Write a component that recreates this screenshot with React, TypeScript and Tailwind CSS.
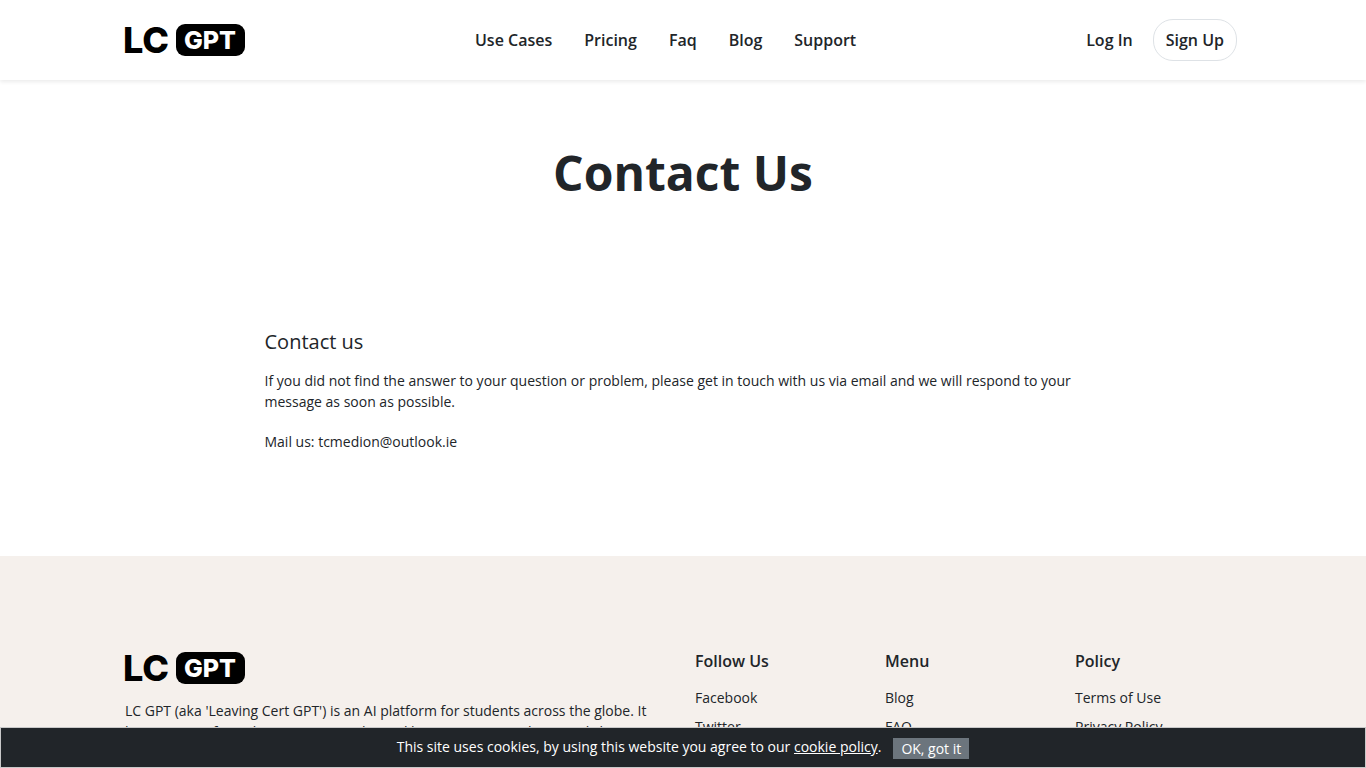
import { clsx } from "clsx";

//#region Data
const navLinks = ["Use Cases", "Pricing", "Faq", "Blog", "Support"];

const footerColumns = [
  { title: "Follow Us", links: ["Facebook", "Twitter", "Instagram"] },
  { title: "Menu", links: ["Blog", "FAQ", "Support"] },
  { title: "Policy", links: ["Terms of Use", "Privacy Policy", "Cookie Policy"] },
];
//#endregion

type LogoProps = React.ComponentPropsWithoutRef<"a">;

function Logo({ className, ...props }: LogoProps) {
  return (
    <a href="#" className={clsx("block w-fit", className)} {...props}>
      <svg
        width="120"
        height="32"
        viewBox="0 0 120 32"
        role="img"
        aria-label="LC GPT"
        className="overflow-visible font-['Inter',sans-serif] font-extrabold"
      >
        <rect x="51" y="0" width="69" height="32" rx="9" fill="#000" />
        <text x="-2" y="29" fontSize="36" fill="#000">
          LC
        </text>
        <text x="59" y="25" fontSize="25" fill="#fff">
          GPT
        </text>
      </svg>
    </a>
  );
}

function Header() {
  return (
    <header className="relative bg-white shadow-[0_2px_4px_rgba(0,0,0,0.08)]">
      <div className="mx-auto flex h-20 max-w-[1140px] items-center justify-between px-3">
        <Logo />
        <nav className="flex gap-8 font-semibold">
          {navLinks.map((label) => (
            <a key={label} href="#">
              {label}
            </a>
          ))}
        </nav>
        <div className="mr-1 flex items-center gap-5 font-semibold">
          <a href="#">Log In</a>
          <a
            href="#"
            className="rounded-[20px] border border-[#dee2e6] px-3 py-2"
          >
            Sign Up
          </a>
        </div>
      </div>
    </header>
  );
}

function Content() {
  return (
    <main>
      <h1 className="pt-16 text-center text-5xl leading-[58px] font-bold">
        Contact Us
      </h1>
      <section className="mx-auto max-w-[861px] px-3 pt-32 pb-[104px] text-sm leading-[21px]">
        <h2 className="mb-4 text-xl leading-6">Contact us</h2>
        <p>
          If you did not find the answer to your question or problem, please get
          in touch with us via email and we will respond to your message as soon
          as possible.
        </p>
        <p className="mt-[19px]">Mail us: tcmedion@outlook.ie</p>
      </section>
    </main>
  );
}

function Footer() {
  return (
    <footer className="bg-[#f5f0ec] pt-24 pb-24">
      <div className="mx-auto grid max-w-[1140px] grid-cols-[3fr_1fr_1fr_1fr]">
        <div className="px-3">
          <Logo />
          <p className="mt-4 text-sm leading-[21px]">
            LC GPT (aka 'Leaving Cert GPT') is an AI platform for students
            across the globe. It has a range of AI subject tutors in subjects
            like Economics, Biology, English, Mathematics and more.
          </p>
        </div>
        {footerColumns.map(({ title, links }) => (
          <div key={title} className="px-3">
            <h3 className="leading-[19px] font-semibold">{title}</h3>
            <ul className="mt-4 space-y-2 text-sm leading-[21px]">
              {links.map((label) => (
                <li key={label}>
                  <a href="#">{label}</a>
                </li>
              ))}
            </ul>
          </div>
        ))}
      </div>
    </footer>
  );
}

function CookieBar() {
  return (
    <div className="fixed inset-x-0 bottom-0 flex items-start justify-center gap-3 border border-[#c8c8c8] bg-[#212529] py-2 text-sm leading-[21px] text-white">
      <p>
        This site uses cookies, by using this website you agree to our{" "}
        <a href="#" className="underline">
          cookie policy
        </a>
        .
      </p>
      <button type="button" className="mt-0.5 bg-[#6c757d] px-2">
        OK, got it
      </button>
    </div>
  );
}

export default function App() {
  return (
    <div className="bg-white font-['Open_Sans',sans-serif] text-[#212529]">
      <Header />
      <Content />
      <Footer />
      <CookieBar />
    </div>
  );
}
